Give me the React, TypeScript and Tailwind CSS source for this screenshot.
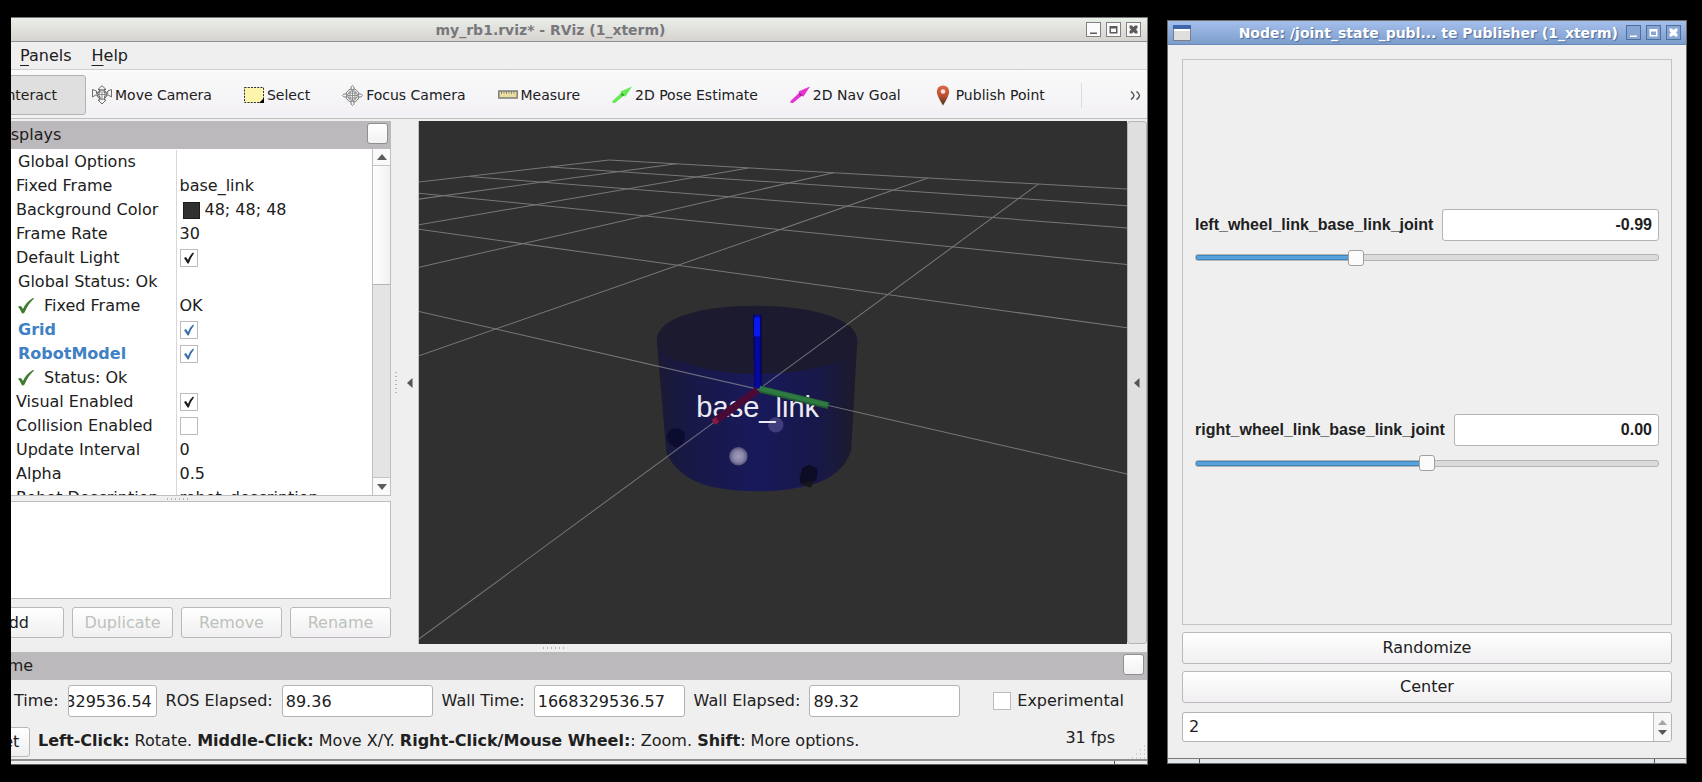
import { useEffect, useRef, useState } from "react";
import type { ReactNode } from "react";

type Row = {
  name: string;
  kind: "group" | "prop" | "status" | "display";
  value?: string;
  checked?: boolean;
  swatch?: boolean;
};

const rows: Row[] = [
  { name: "Global Options", kind: "group" },
  { name: "Fixed Frame", kind: "prop", value: "base_link" },
  { name: "Background Color", kind: "prop", value: "48; 48; 48", swatch: true },
  { name: "Frame Rate", kind: "prop", value: "30" },
  { name: "Default Light", kind: "prop", checked: true },
  { name: "Global Status: Ok", kind: "group" },
  { name: "Fixed Frame", kind: "status", value: "OK" },
  { name: "Grid", kind: "display", checked: true },
  { name: "RobotModel", kind: "display", checked: true },
  { name: "Status: Ok", kind: "status" },
  { name: "Visual Enabled", kind: "prop", checked: true },
  { name: "Collision Enabled", kind: "prop", checked: false },
  { name: "Update Interval", kind: "prop", value: "0" },
  { name: "Alpha", kind: "prop", value: "0.5" },
  { name: "Robot Description", kind: "prop", value: "robot_description" },
];

const nameStyle: Record<Row["kind"], string> = {
  group: "pl-[58px]",
  prop: "pl-[56px]",
  status: "pl-[57px]",
  display: "pl-[58px] font-bold text-[#4080c4]",
};

function CheckBox({ label, checked = false, blue = false, id }: { label?: string; checked?: boolean; blue?: boolean; id?: string }) {
  return (
    <span className={`inline-grid size-[18px] shrink-0 ${blue ? "text-[#3a70ae]" : "text-[#1b1b1b]"}`}>
      <input
        id={id}
        type="checkbox"
        aria-label={label}
        defaultChecked={checked}
        className="peer col-start-1 row-start-1 size-[18px] appearance-none border border-[#bcbcbc] bg-white"
      />
      <svg viewBox="0 0 18 18" className="pointer-events-none invisible col-start-1 row-start-1 size-[18px] peer-checked:visible">
        <path d="M4 9 L6 8 L8 11 Q10 6 13 3.5 L14 4.5 Q11 8 8.7 14.5 L7.6 14.5 Z" fill="currentColor" />
      </svg>
    </span>
  );
}

function StatusOk() {
  return (
    <svg viewBox="0 0 18 18" className="size-[18px] shrink-0">
      <path d="M1 10 Q3 8.5 4.3 9.5 L6 12 Q9 5 16 1 Q17.500 .5 16.600 2 Q11 7 7.500 15.500 Q5.500 17.500 4.600 15.500 Q3.500 12 1 10Z" fill="#3c7a2c" />
    </svg>
  );
}

function MoveIcon() {
  return (
    <svg viewBox="0 0 20 20" className="size-5" fill="#f5f5f5" stroke="#6d6d6d" strokeWidth="1">
      <path d="M10 .7 L14 4.500 H12 V7.500 Q15 8 15.700 8.500 V6 L19.500 4.500 V12 L16 9.800 Q14 11 12.500 11.500 V15 H14 L10 19 L6 15 H8 V11.500 Q5.500 11 4 9.800 L.5 12 V4.500 L4.500 6 V8.500 Q5.500 7.800 8 7.500 V4.500 H6Z" />
      <circle cx="10" cy="9.500" r="4.800" fill="none" />
      <path d="M5.500 9.500 H14.500 M10 5 V14 M7.500 5.500 Q6.500 9.500 7.500 13.500 M12.500 5.500 Q13.500 9.500 12.500 13.500" fill="none" strokeWidth=".7" />
    </svg>
  );
}

function SelectIcon() {
  return (
    <svg viewBox="0 0 20 20" className="size-5">
      <rect x=".5" y="2.500" width="19" height="15" fill="#fdf5ac" stroke="#2e2e2e" strokeDasharray="2 1.200" />
      <path d="M20 13 V18 H15Z" fill="#000" />
    </svg>
  );
}

function FocusIcon() {
  return (
    <svg viewBox="0 0 22 22" className="size-[21px]" fill="none" stroke="#7a7a7a" strokeWidth="1">
      <circle cx="11" cy="11" r="7" />
      <circle cx="11" cy="11" r="5" />
      <path d="M11 6 V16 M6 11 H16 M8.500 7 V15 M13.500 7 V15 M7 8.500 H15 M7 13.500 H15" strokeWidth=".8" />
      <path d="M9.500 5 V2 L11 .5 L12.500 2 V5Z M9.500 17 V20 L11 21.500 L12.500 20 V17Z M5 9.500 H2 L.5 11 L2 12.500 H5Z M17 9.500 H20 L21.500 11 L20 12.500 H17Z" fill="#fafafa" />
    </svg>
  );
}

function MeasureIcon() {
  return (
    <svg viewBox="0 0 20 20" className="size-5">
      <rect x=".8" y="6" width="18.400" height="7" fill="#e9dda0" stroke="#767676" strokeWidth="1.400" />
      <path d="M3.500 6 V9 M6 6 V8.500 M8.500 6 V9 M11 6 V8.500 M13.500 6 V9 M16 6 V8.500" stroke="#767676" strokeWidth=".8" />
    </svg>
  );
}

function ArrowIcon({ color, shade }: { color: string; shade: string }) {
  return (
    <svg viewBox="0 0 20 20" className="size-5">
      <path d="M.5 16 L9 8 L8.500 6.500 L20 1.500 L13.500 11.500 L11.500 11 L3 18 L.5 18Z" fill={color} />
      <path d="M9 8 L12 9.500 L11.500 11 L9.500 10.500Z" fill={shade} />
    </svg>
  );
}

function PinIcon() {
  return (
    <svg viewBox="0 0 14 21" className="h-[21px] w-5">
      <defs>
        <linearGradient id="pin" x1="0" y1="0" x2="0" y2="1">
          <stop offset="0" stopColor="#dd6a4c" />
          <stop offset=".5" stopColor="#bd4f31" />
          <stop offset="1" stopColor="#3f3a20" />
        </linearGradient>
      </defs>
      <path d="M7 .5 A6 6 0 0 1 13.200 7 Q13 11 7 20.500 Q1 11 .8 7 A6 6 0 0 1 7 .5Z" fill="url(#pin)" />
      <circle cx="7" cy="6.500" r="2.300" fill="#f5e4de" />
    </svg>
  );
}

const tools: { label: string; icon: ReactNode }[] = [
  { label: "Move Camera", icon: <MoveIcon /> },
  { label: "Select", icon: <SelectIcon /> },
  { label: "Focus Camera", icon: <FocusIcon /> },
  { label: "Measure", icon: <MeasureIcon /> },
  { label: "2D Pose Estimate", icon: <ArrowIcon color="#66ea58" shade="#348f2c" /> },
  { label: "2D Nav Goal", icon: <ArrowIcon color="#e534cf" shade="#9c1c8c" /> },
  { label: "Publish Point", icon: <PinIcon /> },
];

const glyphs = {
  Minimize: "M4 10.500 H11 V12 H4Z",
  Maximize: "M3.500 4 H11.500 V11.500 H3.500Z M5 6.500 V10 H10 V6.500Z",
  Close: "M3.500 3.500 H6 L7.500 5 L9 3.500 H11.500 V6 L10 7.500 L11.500 9 V11.500 H9 L7.500 10 L6 11.500 H3.500 V9 L5 7.500 L3.500 6Z",
};

function WindowButtons({ active = false }: { active?: boolean }) {
  return (
    <div className="flex gap-[5px]">
      {(Object.keys(glyphs) as (keyof typeof glyphs)[]).map((name) => (
        <button
          key={name}
          type="button"
          aria-label={name}
          className={`size-[15px] border ${active ? "border-[#4f6f9f] bg-[#87a5d2] text-white" : "border-[#858080] bg-[#fbfbfb] text-[#5e5a5a]"}`}
        >
          <svg viewBox="1 1 13 13" className="size-[13px]" fill="currentColor" fillRule="evenodd">
            <path d={glyphs[name]} />
          </svg>
        </button>
      ))}
    </div>
  );
}

function PanelHeader({ title }: { title: string }) {
  return (
    <header className="flex h-7 shrink-0 items-center justify-between bg-[#bbb9bb] pr-[3px] pl-[34px]">
      <h2 className="text-base">{title}</h2>
      <button type="button" aria-label={`Close ${title}`} className="mb-1 size-[21px] rounded-[3px] border border-[#8f8f8f] bg-linear-to-b from-white to-[#f3f1f3]" />
    </header>
  );
}

function Grip({ vertical = false }: { vertical?: boolean }) {
  return (
    <svg viewBox={vertical ? "0 0 2 21" : "0 0 21 2"} className={vertical ? "h-[21px] w-0.5" : "h-0.5 w-[21px]"}>
      <path d={vertical ? "M1 0 V21" : "M0 1 H21"} stroke="#b4b4b4" strokeWidth="2" strokeDasharray="1 3" />
    </svg>
  );
}

function LeftTriangle() {
  return (
    <svg viewBox="0 0 6 10" className="h-2.5 w-1.5">
      <path d="M5.500 0 V10 L0 5Z" fill="#555" />
    </svg>
  );
}

const gridLines = [
  [610, 160, 420, 182], [610, 160, 1128, 189],
  [677, 163.6, 420, 199], [749, 168, 420, 224.6], [834, 172.700, 420, 267], [928, 177.800, 420, 355.400], [1038.500, 183.800, 420, 638],
  [551, 167, 1128, 205.600], [470.700, 176.400, 1128, 228], [420, 193, 1128, 264.300], [420, 229, 1128, 327.600], [420, 311, 1128, 473.600],
];

function Scene() {
  return (
    <svg viewBox="420 121 707 522" preserveAspectRatio="xMidYMid slice" className="min-w-0 flex-1 bg-[#303030]" role="img" aria-label="3D view">
      <defs>
        <linearGradient id="side" x1="0" x2="1">
          <stop offset="0" stopColor="#1b1a33" />
          <stop offset=".14" stopColor="#181845" />
          <stop offset=".5" stopColor="#18195a" />
          <stop offset=".8" stopColor="#18184a" />
          <stop offset="1" stopColor="#1c1b2a" />
        </linearGradient>
        <linearGradient id="zAxis" x1="0" x2="1">
          <stop offset="0" stopColor="#020238" />
          <stop offset=".35" stopColor="#0508a8" />
          <stop offset=".7" stopColor="#0508a0" />
          <stop offset="1" stopColor="#020244" />
        </linearGradient>
        <radialGradient id="ball">
          <stop offset="0" stopColor="#a09cc0" />
          <stop offset=".6" stopColor="#8884a8" />
          <stop offset="1" stopColor="#565277" />
        </radialGradient>
      </defs>
      <path d="M657.500 340 L667 452 Q678 477 712 486 Q735 490.500 760 490.500 Q787 490.500 812 484 Q843 475 851.500 450 L857.700 340Z" fill="url(#side)" />
      <path d="M657.500 340 C657.500 318 700 305.500 757 305.500 C812 305.500 857.700 318 857.700 340 C857.700 350 853 354 848 356 C825 368 793 373.500 757 373.500 C720 373.500 680 365 662 350 Q657.500 346 657.500 340Z" fill="#1c1a2e" />
      <path d="M669 432 Q671 427 679 428 L685 431 Q687 437 683 444 L677 447 Q669 444 667 437Z" fill="#0c0c30" />
      <path d="M803 467 L810 464 L818 468 L817 478 L811 486 L801 483 L800 477Z" fill="#0c0c25" />
      <path d="M801 483 L811 481 L815 480 L811 487Z" fill="#181717" />
      <circle cx="776.300" cy="424.300" r="7.700" fill="#403d7d" />
      <circle cx="739" cy="455.700" r="9.200" fill="url(#ball)" />
      <g stroke="#a3a3a3" strokeWidth="1" opacity=".62">
        {gridLines.map(([x1, y1, x2, y2]) => (
          <line key={`${x1}-${y1}-${y2}`} x1={x1} y1={y1} x2={x2} y2={y2} />
        ))}
      </g>
      <path d="M753.500 314.500 H762 L762.200 388 H754.800Z" fill="url(#zAxis)" />
      <path d="M754.500 317 H760.500 V336 H754.500Z" fill="#0818ef" />
      <text x="697" y="416" fontSize="29" fill="#eceaf2" fontFamily="Liberation Sans, Arial, sans-serif">base_link</text>
      <g strokeLinecap="butt">
        <line x1="760" y1="388.500" x2="829" y2="405" stroke="#225a34" strokeWidth="7" />
        <line x1="760" y1="388" x2="828" y2="404.300" stroke="#2f7a42" strokeWidth="4.500" />
        <line x1="758" y1="389.500" x2="715" y2="421" stroke="#4a0a36" strokeWidth="7.500" />
        <line x1="718" y1="419" x2="714" y2="421.800" stroke="#861a3e" strokeWidth="6" />
      </g>
    </svg>
  );
}

const inputBox = "rounded-[3px] border border-[#b3b3b3] bg-white text-base";
const pushButton = "rounded-[3px] border border-[#b9b9b9] bg-linear-to-b from-white to-[#f1eff1] text-base";

function DisplaysPanel() {
  return (
    <section className="flex w-[431px] shrink-0 flex-col">
      <PanelHeader title="Displays" />
      <div className="flex h-[347px] overflow-hidden border-r border-b border-[#bfbfbf] bg-white">
        <div className="min-w-0 flex-1 pt-px">
          <table className="w-full table-fixed border-collapse">
            <tbody>
              {rows.map((r, i) => (
                <tr key={i} className="h-6">
                  <th scope="row" className={`h-6 w-[216px] border-r border-[#d8d8d8] p-0 text-left text-base leading-6 whitespace-nowrap ${r.kind === "display" ? "" : "font-normal"} ${nameStyle[r.kind]}`}>
                    {r.kind === "status" ? (
                      <span className="flex items-center gap-[9px]">
                        <StatusOk />
                        {r.name}
                      </span>
                    ) : (
                      r.name
                    )}
                  </th>
                  <td className="h-6 p-0 pl-[3px] text-base leading-6">
                    <span className="flex items-center">
                      {r.swatch && <span className="mr-[5px] ml-[3px] size-[17px] border border-[#1c1c1c] bg-[#303030]" />}
                      {r.checked !== undefined && <CheckBox label={r.name} checked={r.checked} blue={r.kind === "display"} />}
                      {r.value}
                    </span>
                  </td>
                </tr>
              ))}
            </tbody>
          </table>
        </div>
        <div className="flex w-[18px] flex-col border-l border-[#bfbfbf] bg-[#e4e4e4]">
          <button type="button" aria-label="Scroll up" className="grid h-[17px] place-items-center border-b border-[#c4c4c4] bg-[#fafafa]">
            <svg viewBox="0 0 10 6" className="h-1.5 w-2.5"><path d="M0 6 H10 L5 0Z" fill="#5c5c5c" /></svg>
          </button>
          <div className="h-[119px] border-b border-[#b5b5b5] bg-linear-to-r from-white to-[#f2f0f4]" />
          <button type="button" aria-label="Scroll down" className="mt-auto grid h-[18px] place-items-center border-t border-[#c4c4c4] bg-[#fafafa]">
            <svg viewBox="0 0 10 6" className="h-1.5 w-2.5"><path d="M0 0 H10 L5 6Z" fill="#5c5c5c" /></svg>
          </button>
        </div>
      </div>
      <div className="flex h-[5px] items-center pl-[207px]"><Grip /></div>
      <div className="min-h-24 flex-1 border border-[#bdbdbd] bg-white" />
      <div className="mt-2 mb-1.5 flex gap-2 pl-[3px]">
        <button type="button" className={`h-[31px] w-[101px] ${pushButton}`}>Add</button>
        {["Duplicate", "Remove", "Rename"].map((name) => (
          <button key={name} type="button" disabled className={`h-[31px] w-[101px] text-[#bcc2bb] ${pushButton}`}>{name}</button>
        ))}
      </div>
    </section>
  );
}

function TimePanel() {
  const rosTime = useRef<HTMLInputElement>(null);
  useEffect(() => {
    if (rosTime.current) rosTime.current.scrollLeft = rosTime.current.scrollWidth;
  }, []);
  return (
    <section>
      <PanelHeader title="Time" />
      <div className="flex items-center gap-[9px] pt-[5px] pr-[23px] pl-[54px] whitespace-nowrap">
        <label htmlFor="ros-time">Time:</label>
        <input id="ros-time" ref={rosTime} defaultValue="1668329536.54" className={`h-8 w-[89px] pr-1 ${inputBox}`} />
        <label htmlFor="ros-elapsed">ROS Elapsed:</label>
        <input id="ros-elapsed" defaultValue="89.36" className={`h-8 w-0 flex-1 px-[3px] ${inputBox}`} />
        <label htmlFor="wall-time">Wall Time:</label>
        <input id="wall-time" defaultValue="1668329536.57" className={`h-8 w-0 flex-1 px-[3px] ${inputBox}`} />
        <label htmlFor="wall-elapsed">Wall Elapsed:</label>
        <input id="wall-elapsed" defaultValue="89.32" className={`h-8 w-0 flex-1 px-[3px] ${inputBox}`} />
        <div className="ml-6 flex items-center gap-1.5">
          <CheckBox id="experimental" />
          <label htmlFor="experimental">Experimental</label>
        </div>
      </div>
    </section>
  );
}

function RVizWindow() {
  return (
    <section className="mt-[17px] mb-[17px] flex min-w-0 flex-1 overflow-hidden border-t border-r border-[#777] bg-[#efefef]">
      <div className="-ml-[51px] flex min-w-0 flex-1 flex-col">
        <header className="grid h-6 shrink-0 grid-cols-[1fr_auto_1fr] items-center border-b border-[#8f8f93] bg-linear-to-b from-[#e9efe8] to-[#d8d3d0] pr-1.5">
          <h1 className="col-start-2 text-sm leading-5 font-bold text-[#77777c]">my_rb1.rviz* - RViz (1_xterm)</h1>
          <div className="justify-self-end"><WindowButtons /></div>
        </header>
        <nav className="flex h-7 shrink-0 items-center gap-5 border-b border-[#cfd1cf] pl-[60px]">
          {["Panels", "Help"].map((m) => (
            <button key={m} type="button" className="text-base leading-6">
              <span className="underline underline-offset-4">{m[0]}</span>
              {m.slice(1)}
            </button>
          ))}
        </nav>
        <div className="flex h-[49px] shrink-0 items-center border-b border-[#bcc0bc] bg-linear-to-b from-[#fafafa] to-[#f2f0f4] pt-0.5 text-sm whitespace-nowrap">
          <button type="button" className="mr-0.5 h-10 w-[126px] rounded-[3px] border border-[#b2b2b2] bg-[#dfdfdf] pr-7 text-right">Interact</button>
          {tools.map((t) => (
            <button key={t.label} type="button" className="flex h-10 items-center gap-[3px] pr-7 pl-1">
              {t.icon}
              {t.label}
            </button>
          ))}
          <span className="ml-2 h-[25px] border-l border-[#dcdcdc]" />
          <button type="button" aria-label="More tools" className="mr-1.5 ml-auto">
            <svg viewBox="0 0 11 9" className="h-[9px] w-[11px]" fill="none" stroke="#555" strokeWidth="1.500">
              <path d="M1 .5 Q4 3 4 4.500 Q4 6 1 8.500 M6.500 .5 Q9.500 3 9.500 4.500 Q9.500 6 6.500 8.500" />
            </svg>
          </button>
        </div>
        <div className="mt-0.5 flex flex-1">
          <DisplaysPanel />
          <div className="flex w-7 shrink-0 items-center gap-2.5 border-r border-[#c2c2c2] pl-1">
            <Grip vertical />
            <LeftTriangle />
          </div>
          <Scene />
          <button type="button" aria-label="Show right panels" className="grid w-5 shrink-0 place-items-center rounded-[3px] border border-[#b5b5b5] bg-[#dfdfdf]">
            <LeftTriangle />
          </button>
        </div>
        <div className="flex h-2 shrink-0 items-center justify-center"><Grip /></div>
        <TimePanel />
        <div className="mt-2.5 flex h-8 items-start gap-2 pl-1">
          <button type="button" className={`h-[30px] w-[66px] ${pushButton}`}>Reset</button>
          <p className="flex-1 text-base leading-7">
            <b>Left-Click:</b> Rotate. <b>Middle-Click:</b> Move X/Y. <b>Right-Click/Mouse Wheel:</b>: Zoom. <b>Shift</b>: More options.
          </p>
          <output className="text-base leading-[22px]">31 fps</output>
          <svg viewBox="0 0 14 14" className="mr-0.5 ml-2 size-3.5 self-end">
            <path d="M1 13 H14 M5 9 H14 M9 5 H14 M13 1 H14" stroke="#b0b0b0" strokeWidth="1" strokeDasharray="1 3" />
          </svg>
        </div>
        <div className="flex h-1.5 shrink-0 justify-end border-t-2 border-b border-t-[#8f8f8f] border-b-[#606060] bg-[#eceef0]">
          <span className="w-[33px] border-l border-[#555]" />
        </div>
      </div>
    </section>
  );
}

function Joint({ name, initial }: { name: string; initial: number }) {
  const [value, setValue] = useState(initial);
  const fill = ((value + 3.14) / 6.28) * 100;
  return (
    <div className="flex flex-col gap-[9px]">
      <div className="flex items-center gap-[9px]">
        <label htmlFor={name} className="font-['Liberation_Sans',Arial,sans-serif] text-base font-bold">{name}</label>
        <input aria-label={`${name} value`} readOnly value={value.toFixed(2)} className={`h-8 w-0 flex-1 px-1.5 text-right font-['Liberation_Sans',Arial,sans-serif] font-bold ${inputBox}`} />
      </div>
      <div className="grid items-center">
        <div className="col-start-1 row-start-1 h-[7px] overflow-hidden rounded-[3px] border border-[#b4b4b4] bg-[#dcdadc]">
          <div className="h-full bg-[#57a2dc] shadow-[inset_0_0_0_1px_#3f86bd]" style={{ width: `${fill}%` }} />
        </div>
        <input
          id={name}
          type="range"
          min={-3.14}
          max={3.14}
          step={0.01}
          value={value}
          onChange={(e) => setValue(Number(e.target.value))}
          className="col-start-1 row-start-1 h-4 w-full appearance-none bg-transparent [&::-webkit-slider-thumb]:size-4 [&::-webkit-slider-thumb]:appearance-none [&::-webkit-slider-thumb]:rounded-[3px] [&::-webkit-slider-thumb]:border [&::-webkit-slider-thumb]:border-solid [&::-webkit-slider-thumb]:border-[#a0a0a0] [&::-webkit-slider-thumb]:bg-[#fcfbfc]"
        />
      </div>
    </div>
  );
}

function JointWindow() {
  return (
    <section className="mt-5 mb-[18px] flex w-[520px] shrink-0 flex-col border border-[#6a6a6a] bg-[#efefef]">
      <header className="flex h-6 shrink-0 items-center border-b border-[#6a89b8] bg-linear-to-b from-[#a5bfec] to-[#7c9dcb] px-[5px]">
        <svg viewBox="0 0 18 16" className="h-4 w-[18px]">
          <rect x=".5" y=".5" width="17" height="15" fill="#dedede" stroke="#7a7f8a" />
          <path d="M0 0 H18 V4 H0Z" fill="#3f68ac" />
          <path d="M1 4 H17 V6 H1Z" fill="#fff" />
        </svg>
        <h1 className="mr-2 ml-auto text-sm leading-5 font-bold text-white [text-shadow:1px_1px_1px_#4a6a9c]">Node: /joint_state_publ... te Publisher (1_xterm)</h1>
        <WindowButtons active />
      </header>
      <div className="flex flex-1 flex-col px-[14px] pt-[14px] pb-4">
        <div className="flex flex-1 flex-col justify-evenly border border-[#c3c3c3] px-3 pb-1">
          <Joint name="left_wheel_link_base_link_joint" initial={-0.99} />
          <Joint name="right_wheel_link_base_link_joint" initial={0} />
        </div>
        <button type="button" className={`mt-[7px] h-8 ${pushButton}`}>Randomize</button>
        <button type="button" className={`mt-[7px] h-8 ${pushButton}`}>Center</button>
        <div className={`mt-[9px] flex h-[30px] overflow-hidden ${inputBox}`}>
          <input aria-label="Columns" inputMode="numeric" defaultValue="2" className="min-w-0 flex-1 px-1.5 text-base" />
          <div className="flex w-[18px] flex-col border-l border-[#bdbdbd] bg-[#f7f6f7]">
            <button type="button" aria-label="Increase" className="grid flex-1 place-items-center pt-1">
              <svg viewBox="0 0 9 5" className="h-[5px] w-[9px]"><path d="M0 5 H9 L4.500 0Z" fill="#a4a4a4" /></svg>
            </button>
            <button type="button" aria-label="Decrease" className="grid flex-1 place-items-center pb-1">
              <svg viewBox="0 0 9 5" className="h-[5px] w-[9px]"><path d="M0 0 H9 L4.500 5Z" fill="#555" /></svg>
            </button>
          </div>
        </div>
      </div>
      <div className="flex h-[5px] shrink-0 justify-between border-t border-[#777] bg-[#e4e7ec]">
        <span className="w-8 border-r border-[#555]" />
        <span className="w-8 border-l border-[#555]" />
      </div>
    </section>
  );
}

export default function App() {
  return (
    <main className="flex min-h-screen gap-[19px] bg-black pr-[15px] pl-[11px] font-['DejaVu_Sans',Verdana,sans-serif] text-base leading-6 text-[#202020]">
      <RVizWindow />
      <JointWindow />
    </main>
  );
}
